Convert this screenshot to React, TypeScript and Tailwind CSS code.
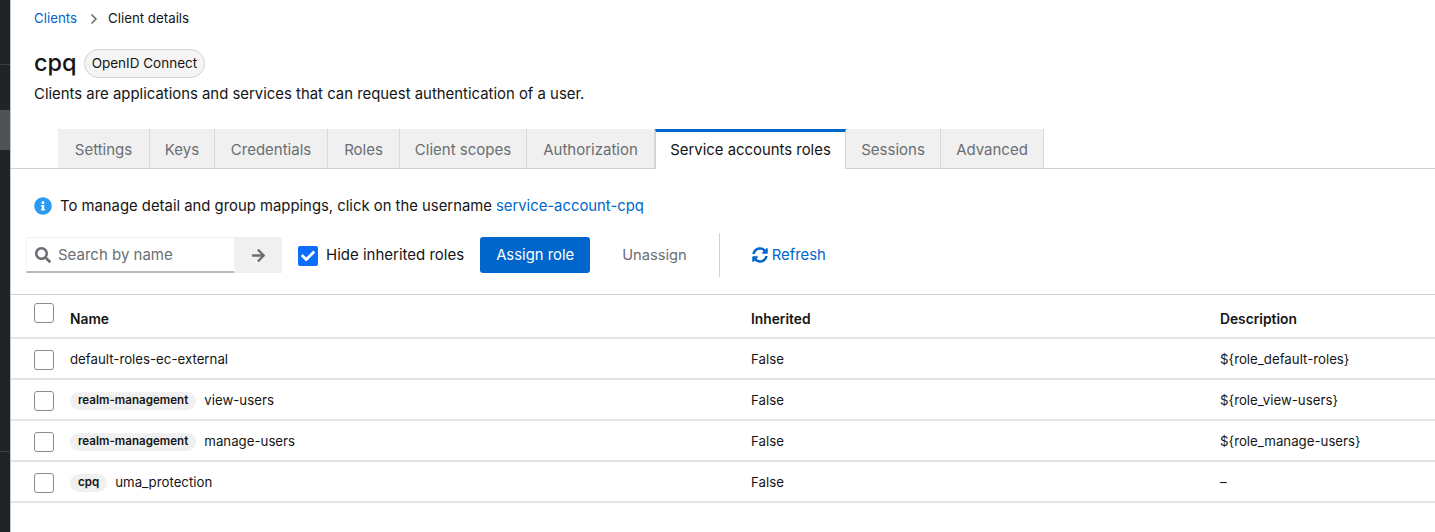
import { ChevronRight } from "lucide-react"
import { FaArrowRight, FaCheck, FaInfoCircle, FaSearch, FaSyncAlt } from "react-icons/fa"

const tabs = [
  { label: "Settings", width: "w-[92px]" },
  { label: "Keys", width: "w-[65px]" },
  { label: "Credentials", width: "w-[113px]" },
  { label: "Roles", width: "w-[72px]" },
  { label: "Client scopes", width: "w-[127px]" },
  { label: "Authorization", width: "w-[128px]" },
  { label: "Service accounts roles", width: "w-[191px]" },
  { label: "Sessions", width: "w-[95px]" },
  { label: "Advanced", width: "w-[103px]" },
]

const rows = [
  { chip: "", name: "default-roles-ec-external", inherited: "False", description: "${role_default-roles}" },
  { chip: "realm-management", name: "view-users", inherited: "False", description: "${role_view-users}" },
  { chip: "realm-management", name: "manage-users", inherited: "False", description: "${role_manage-users}" },
  { chip: "cpq", name: "uma_protection", inherited: "False", description: "–" },
]

function Checkbox({ className = "" }: { className?: string }) {
  return <div className={`w-5 h-5 rounded-[3px] border border-[#8a8d90] bg-white ${className}`}></div>
}

export default function App() {
  return (
    <div className="flex h-[532px] w-[1435px] overflow-hidden bg-white text-[#151515] font-['Inter',sans-serif]">
      {/* Sidebar edge */}
      <div className="w-[11px] shrink-0 flex flex-col bg-[#212427] border-r border-r-[#c4c4c4]">
        <div className="h-[65px] border-b border-[#3c3f42]"></div>
        <div className="h-[45px]"></div>
        <div className="h-[40px] bg-[#4f5255]"></div>
        <div className="h-[302px] border-b border-[#3c3f42]"></div>
      </div>

      <div className="flex-1 min-w-0">
        {/* Header */}
        <div className="pl-[23px] pt-[10px]">
          <div className="flex items-center h-[18px] text-[13.3px]">
            <a className="text-[#0066cc]">Clients</a>
            <ChevronRight strokeWidth={2.5} className="w-4 h-4 ml-[9px] mr-[6px] text-[#6a6e73]" />
            <span>Client details</span>
          </div>
          <div className="flex items-center mt-[19px] h-[32px]">
            <h1 className="text-[23.5px] font-medium leading-none">cpq</h1>
            <span className="ml-[7px] h-[29px] px-[7px] flex items-center rounded-full border border-[#d2d2d2] bg-[#f5f5f5] text-[13.5px]">OpenID Connect</span>
          </div>
          <p className="mt-[3px] text-[14.9px] leading-[24px]">Clients are applications and services that can request authentication of a user.</p>
        </div>

        {/* Tabs */}
        <div className="flex mt-[23px] pl-[47px] h-[40px] border-b border-[#d2d2d2]">
          {tabs.map((tab) =>
            tab.label === "Service accounts roles" ? (
              <div key={tab.label} className={`${tab.width} h-[40px] flex items-center justify-center bg-white border-t-[3px] border-t-[#0066cc] border-x border-x-[#d2d2d2] text-[14.9px] whitespace-nowrap`}>
                {tab.label}
              </div>
            ) : (
              <div key={tab.label} className={`${tab.width} h-[39px] pt-[3px] flex items-center justify-center bg-[#f0f0f0] border-r border-r-[#d8d8d8] text-[15px] text-[#6a6e73] whitespace-nowrap`}>
                {tab.label}
              </div>
            )
          )}
        </div>

        {/* Info line */}
        <div className="flex items-center mt-[25px] pl-[23px] h-[24px] text-[14.85px]">
          <FaInfoCircle className="w-[18px] h-[18px] text-[#2b9af3]" />
          <span className="ml-[8px]">To manage detail and group mappings, click on the username</span>
          <a className="ml-[4px] text-[#0066cc]">service-account-cpq</a>
        </div>

        {/* Toolbar */}
        <div className="flex items-center pl-[15px] mt-[15px] h-[44px]">
          <div className="flex items-center w-[208px] h-[36px] border-b-2 border-b-[#b8bbbe] border-t border-l border-t-[#f0f0f0] border-l-[#f0f0f0] pl-[8px] gap-[7px]">
            <FaSearch className="w-[16px] h-[16px] text-[#6a6e73]" />
            <span className="pt-[1px] text-[15px] text-[#6a6e73]">Search by name</span>
          </div>
          <div className="flex items-center justify-center w-[48px] h-[36px] bg-[#f0f0f0]">
            <FaArrowRight className="w-[15px] h-[15px] text-[#6a6e73]" />
          </div>
          <div className="flex items-center justify-center ml-[16px] mt-[1px] w-5 h-5 rounded-[2px] bg-[#0d6efd]">
            <FaCheck className="w-[14px] h-[14px] text-white" />
          </div>
          <span className="ml-[8px] pt-[1px] text-[15px]">Hide inherited roles</span>
          <button className="ml-[16px] pt-[1px] h-[36px] w-[110px] rounded-[3px] bg-[#0066cc] text-white text-[14.85px]">Assign role</button>
          <button className="ml-[16px] pt-[1px] h-[36px] px-[16px] text-[14.7px] text-[#6a6e73]">Unassign</button>
          <div className="ml-[16px] h-[44px] w-px bg-[#d2d2d2]"></div>
          <button className="ml-[32px] pt-[1px] flex items-center gap-[4px] text-[14.85px] text-[#0066cc]">
            <FaSyncAlt className="w-[16px] h-[16px]" />
            Refresh
          </button>
        </div>

        {/* Table */}
        <table className="mt-[17px] w-full border-t border-[#d2d2d2] table-fixed text-[13.25px]">
          <thead>
            <tr className="h-[43px] border-b-2 border-[#e4e4e4] text-[13.8px]">
              <th className="w-[59px] pl-[23px] align-top pt-[8px] font-normal"><Checkbox /></th>
              <th className="w-[681px] text-left font-semibold pt-[8px]">Name</th>
              <th className="w-[469px] text-left font-semibold pt-[8px]">Inherited</th>
              <th className="text-left font-semibold pt-[8px]">Description</th>
            </tr>
          </thead>
          <tbody>
            {rows.map((row) => (
              <tr key={row.name + row.chip} className="h-[41px] border-b-2 border-[#e4e4e4]">
                <td className="pl-[23px] pt-[4px]"><Checkbox /></td>
                <td className="pt-[4px]">
                  <div className="flex items-center">
                    {row.chip && (
                      <span className="mr-[8px] h-[18px] px-[8px] flex items-center rounded-full bg-[#f0f0f0] text-[11.6px] font-semibold">{row.chip}</span>
                    )}
                    <span>{row.name}</span>
                  </div>
                </td>
                <td className="pt-[4px]">{row.inherited}</td>
                <td className="pt-[4px]">{row.description}</td>
              </tr>
            ))}
          </tbody>
        </table>
      </div>
    </div>
  )
}
